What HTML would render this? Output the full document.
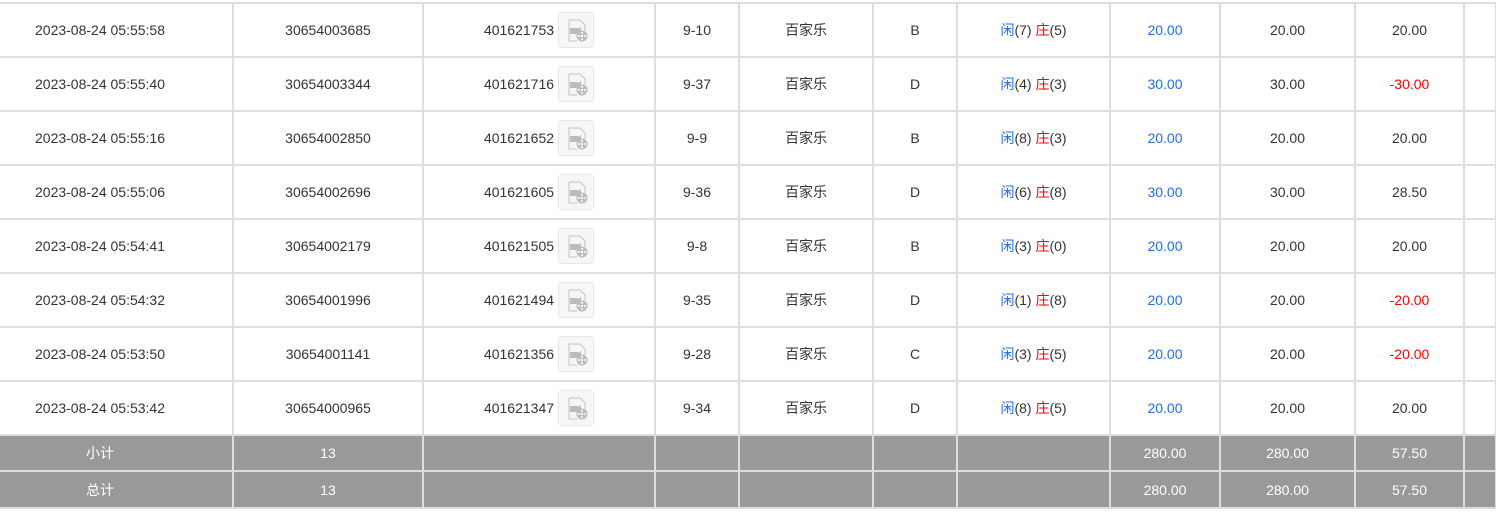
<!DOCTYPE html>
<html><head><meta charset="utf-8"><style>
body{margin:0;background:#fff;width:1496px;height:514px;overflow:hidden;font-family:"Liberation Sans","Noto Sans CJK SC",sans-serif;font-size:14px;color:#333}
table{position:absolute;left:-2px;top:2px;border-collapse:collapse;table-layout:fixed;width:1498px}
td{border:2px solid #ddd;text-align:center;padding:0;white-space:nowrap}
td:first-child{padding-right:30px;border-left:none}
tr.d td{height:52px}
tr.g td{background:#999;color:#fff;border-color:#ddd;height:34px}
tr.g2 td{height:35px}
.b{color:#1e6ff5}.r{color:#f00}
.n{vertical-align:middle}
.ic{display:inline-block;width:34px;height:34px;border:1px solid #e6e6e6;border-radius:4px;background:#f6f6f6;vertical-align:middle;margin-left:4px;position:relative}
.ic svg{position:absolute;left:6px;top:6px}
</style></head><body>
<svg width="0" height="0" style="position:absolute"><defs><symbol id="v" viewBox="0 0 24 24"><path d="M4 1h11l5 5v6M4 1v21h8" fill="none" stroke="#ccc" stroke-width="1.2"/><rect x="5" y="9" width="8" height="6" fill="#bbb"/><path d="M13 10l3-2v8l-3-2z" fill="#bbb"/><circle cx="17" cy="17" r="5.5" fill="#bbb"/><circle cx="17" cy="17" r="1.3" fill="#f6f6f6"/><circle cx="17" cy="13.8" r="1.1" fill="#f6f6f6"/><circle cx="17" cy="20.2" r="1.1" fill="#f6f6f6"/><circle cx="13.8" cy="17" r="1.1" fill="#f6f6f6"/><circle cx="20.2" cy="17" r="1.1" fill="#f6f6f6"/></symbol></defs></svg>
<table>
<colgroup><col style="width:235px"><col style="width:190px"><col style="width:232px"><col style="width:84px"><col style="width:134px"><col style="width:84px"><col style="width:153px"><col style="width:110px"><col style="width:135px"><col style="width:109px"><col style="width:32px"></colgroup>
<tr class="d"><td>2023-08-24 05:55:58</td><td>30654003685</td><td><span class="n">401621753</span><span class="ic"><svg width="24" height="24"><use href="#v"/></svg></span></td><td>9-10</td><td>百家乐</td><td>B</td><td><span class="b">闲</span>(7) <span class="r">庄</span>(5)</td><td class="b">20.00</td><td>20.00</td><td>20.00</td><td></td></tr>
<tr class="d"><td>2023-08-24 05:55:40</td><td>30654003344</td><td><span class="n">401621716</span><span class="ic"><svg width="24" height="24"><use href="#v"/></svg></span></td><td>9-37</td><td>百家乐</td><td>D</td><td><span class="b">闲</span>(4) <span class="r">庄</span>(3)</td><td class="b">30.00</td><td>30.00</td><td class="r">-30.00</td><td></td></tr>
<tr class="d"><td>2023-08-24 05:55:16</td><td>30654002850</td><td><span class="n">401621652</span><span class="ic"><svg width="24" height="24"><use href="#v"/></svg></span></td><td>9-9</td><td>百家乐</td><td>B</td><td><span class="b">闲</span>(8) <span class="r">庄</span>(3)</td><td class="b">20.00</td><td>20.00</td><td>20.00</td><td></td></tr>
<tr class="d"><td>2023-08-24 05:55:06</td><td>30654002696</td><td><span class="n">401621605</span><span class="ic"><svg width="24" height="24"><use href="#v"/></svg></span></td><td>9-36</td><td>百家乐</td><td>D</td><td><span class="b">闲</span>(6) <span class="r">庄</span>(8)</td><td class="b">30.00</td><td>30.00</td><td>28.50</td><td></td></tr>
<tr class="d"><td>2023-08-24 05:54:41</td><td>30654002179</td><td><span class="n">401621505</span><span class="ic"><svg width="24" height="24"><use href="#v"/></svg></span></td><td>9-8</td><td>百家乐</td><td>B</td><td><span class="b">闲</span>(3) <span class="r">庄</span>(0)</td><td class="b">20.00</td><td>20.00</td><td>20.00</td><td></td></tr>
<tr class="d"><td>2023-08-24 05:54:32</td><td>30654001996</td><td><span class="n">401621494</span><span class="ic"><svg width="24" height="24"><use href="#v"/></svg></span></td><td>9-35</td><td>百家乐</td><td>D</td><td><span class="b">闲</span>(1) <span class="r">庄</span>(8)</td><td class="b">20.00</td><td>20.00</td><td class="r">-20.00</td><td></td></tr>
<tr class="d"><td>2023-08-24 05:53:50</td><td>30654001141</td><td><span class="n">401621356</span><span class="ic"><svg width="24" height="24"><use href="#v"/></svg></span></td><td>9-28</td><td>百家乐</td><td>C</td><td><span class="b">闲</span>(3) <span class="r">庄</span>(5)</td><td class="b">20.00</td><td>20.00</td><td class="r">-20.00</td><td></td></tr>
<tr class="d"><td>2023-08-24 05:53:42</td><td>30654000965</td><td><span class="n">401621347</span><span class="ic"><svg width="24" height="24"><use href="#v"/></svg></span></td><td>9-34</td><td>百家乐</td><td>D</td><td><span class="b">闲</span>(8) <span class="r">庄</span>(5)</td><td class="b">20.00</td><td>20.00</td><td>20.00</td><td></td></tr>
<tr class="g"><td>小计</td><td>13</td><td></td><td></td><td></td><td></td><td></td><td>280.00</td><td>280.00</td><td>57.50</td><td></td></tr>
<tr class="g g2"><td>总计</td><td>13</td><td></td><td></td><td></td><td></td><td></td><td>280.00</td><td>280.00</td><td>57.50</td><td></td></tr>
</table>
</body></html>
